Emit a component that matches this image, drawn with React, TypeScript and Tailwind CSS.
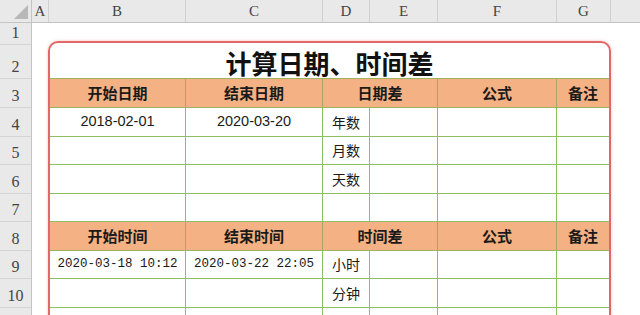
import React from 'react';

type Cell = { w: number; t?: string; mono?: boolean; sans?: boolean };

const colHeads = [
  { label: 'A', w: 17 },
  { label: 'B', w: 137 },
  { label: 'C', w: 137 },
  { label: 'D', w: 47 },
  { label: 'E', w: 68 },
  { label: 'F', w: 119 },
  { label: 'G', w: 54 },
];

const rowHeads = [
  { n: '1', h: 22 },
  { n: '2', h: 34 },
  { n: '3', h: 29 },
  { n: '4', h: 29 },
  { n: '5', h: 28 },
  { n: '6', h: 29 },
  { n: '7', h: 28 },
  { n: '8', h: 29 },
  { n: '9', h: 28 },
  { n: '10', h: 29 },
  { n: '', h: 29 },
];

const cjk = "'Noto Sans CJK SC', 'Liberation Sans', sans-serif";

const HeaderRow: React.FC<{ cells: Cell[] }> = ({ cells }) => (
  <div className="flex h-[29px] bg-[#f4b183] border-b border-[#9cb35e]">
    {cells.map((c, i) => (
      <div
        key={i}
        className={`flex items-center justify-center text-[15px] font-bold text-[#1a1a1a] ${
          i < cells.length - 1 ? 'border-r border-[#a6a95c]' : ''
        }`}
        style={{ width: c.w, fontFamily: cjk }}
      >
        {c.t}
      </div>
    ))}
  </div>
);

const BodyRow: React.FC<{ h: number; cells: Cell[] }> = ({ h, cells }) => (
  <div className="flex border-b border-[#8fbf63]" style={{ height: h }}>
    {cells.map((c, i) => (
      <div
        key={i}
        className={`flex items-center justify-center text-[#1a1a1a] ${
          i < cells.length - 1 ? 'border-r border-[#8fbf63]' : ''
        } ${c.mono ? "font-['Liberation_Mono',monospace] text-[12.5px]" : c.sans ? "font-['Liberation_Sans',sans-serif] text-[14.5px]" : "font-['Noto_Sans_CJK_SC',sans-serif] text-[14px]"}`}
        style={{ width: c.w }}
      >
        {c.t}
      </div>
    ))}
  </div>
);

const W = [136, 137, 47, 68, 119, 52];
const body = (b = '', c = '', d = '', opts: Partial<Cell> = {}): Cell[] => [
  { w: W[0], t: b, ...opts },
  { w: W[1], t: c, ...opts },
  { w: W[2], t: d },
  { w: W[3] },
  { w: W[4] },
  { w: W[5] },
];

export default function App() {
  return (
    <div className="w-[640px] h-[315px] overflow-hidden bg-white select-none">
      {/* column letters */}
      <div className="flex h-[23px] bg-[#e9e9e9] border-b border-[#c4c4c4]">
        <div className="w-[32px] shrink-0 border-r border-[#c4c4c4] flex items-end justify-end p-[3px]">
          <svg width="14" height="14" viewBox="0 0 14 14">
            <polygon points="14,0 14,14 0,14" fill="#b8b8b8" />
          </svg>
        </div>
        {colHeads.map((c) => (
          <div
            key={c.label}
            className="shrink-0 border-r border-[#d0d0d0] flex items-center justify-center text-[15px] text-[#444] font-['Liberation_Serif',serif]"
            style={{ width: c.w }}
          >
            {c.label}
          </div>
        ))}
        <div className="flex-1" />
      </div>

      <div className="flex">
        {/* row numbers */}
        <div className="w-[32px] shrink-0 bg-[#e9e9e9] border-r border-[#c4c4c4]">
          {rowHeads.map((r, i) => (
            <div
              key={i}
              className="flex items-end justify-center pb-[2px] border-b border-[#d4d4d4] text-[16px] leading-[18px] text-[#444] font-['Liberation_Serif',serif]"
              style={{ height: r.h }}
            >
              {r.n}
            </div>
          ))}
        </div>

        {/* sheet */}
        <div className="flex-1 pt-[18px] pl-[16px]">
          <div className="w-[563px] rounded-[10px] border-2 border-[#e26767] overflow-hidden shadow-[0_0_3px_rgba(226,103,103,0.45)]">
            <div
              className="h-[36px] flex items-center justify-center pt-[3px] border-b border-[#9fb25f] text-[26px] font-bold text-[#111]"
              style={{ fontFamily: cjk }}
            >
              计算日期、时间差
            </div>
            <HeaderRow
              cells={[
                { w: 136, t: '开始日期' },
                { w: 137, t: '结束日期' },
                { w: 115, t: '日期差' },
                { w: 119, t: '公式' },
                { w: 52, t: '备注' },
              ]}
            />
            <BodyRow h={29} cells={body('2018-02-01', '2020-03-20', '年数', { sans: true })} />
            <BodyRow h={28} cells={body('', '', '月数')} />
            <BodyRow h={29} cells={body('', '', '天数')} />
            <BodyRow h={28} cells={body()} />
            <HeaderRow
              cells={[
                { w: 136, t: '开始时间' },
                { w: 137, t: '结束时间' },
                { w: 115, t: '时间差' },
                { w: 119, t: '公式' },
                { w: 52, t: '备注' },
              ]}
            />
            <BodyRow h={28} cells={body('2020-03-18 10:12', '2020-03-22 22:05', '小时', { mono: true })} />
            <BodyRow h={29} cells={body('', '', '分钟')} />
            <BodyRow h={29} cells={body()} />
          </div>
        </div>
      </div>
    </div>
  );
}
